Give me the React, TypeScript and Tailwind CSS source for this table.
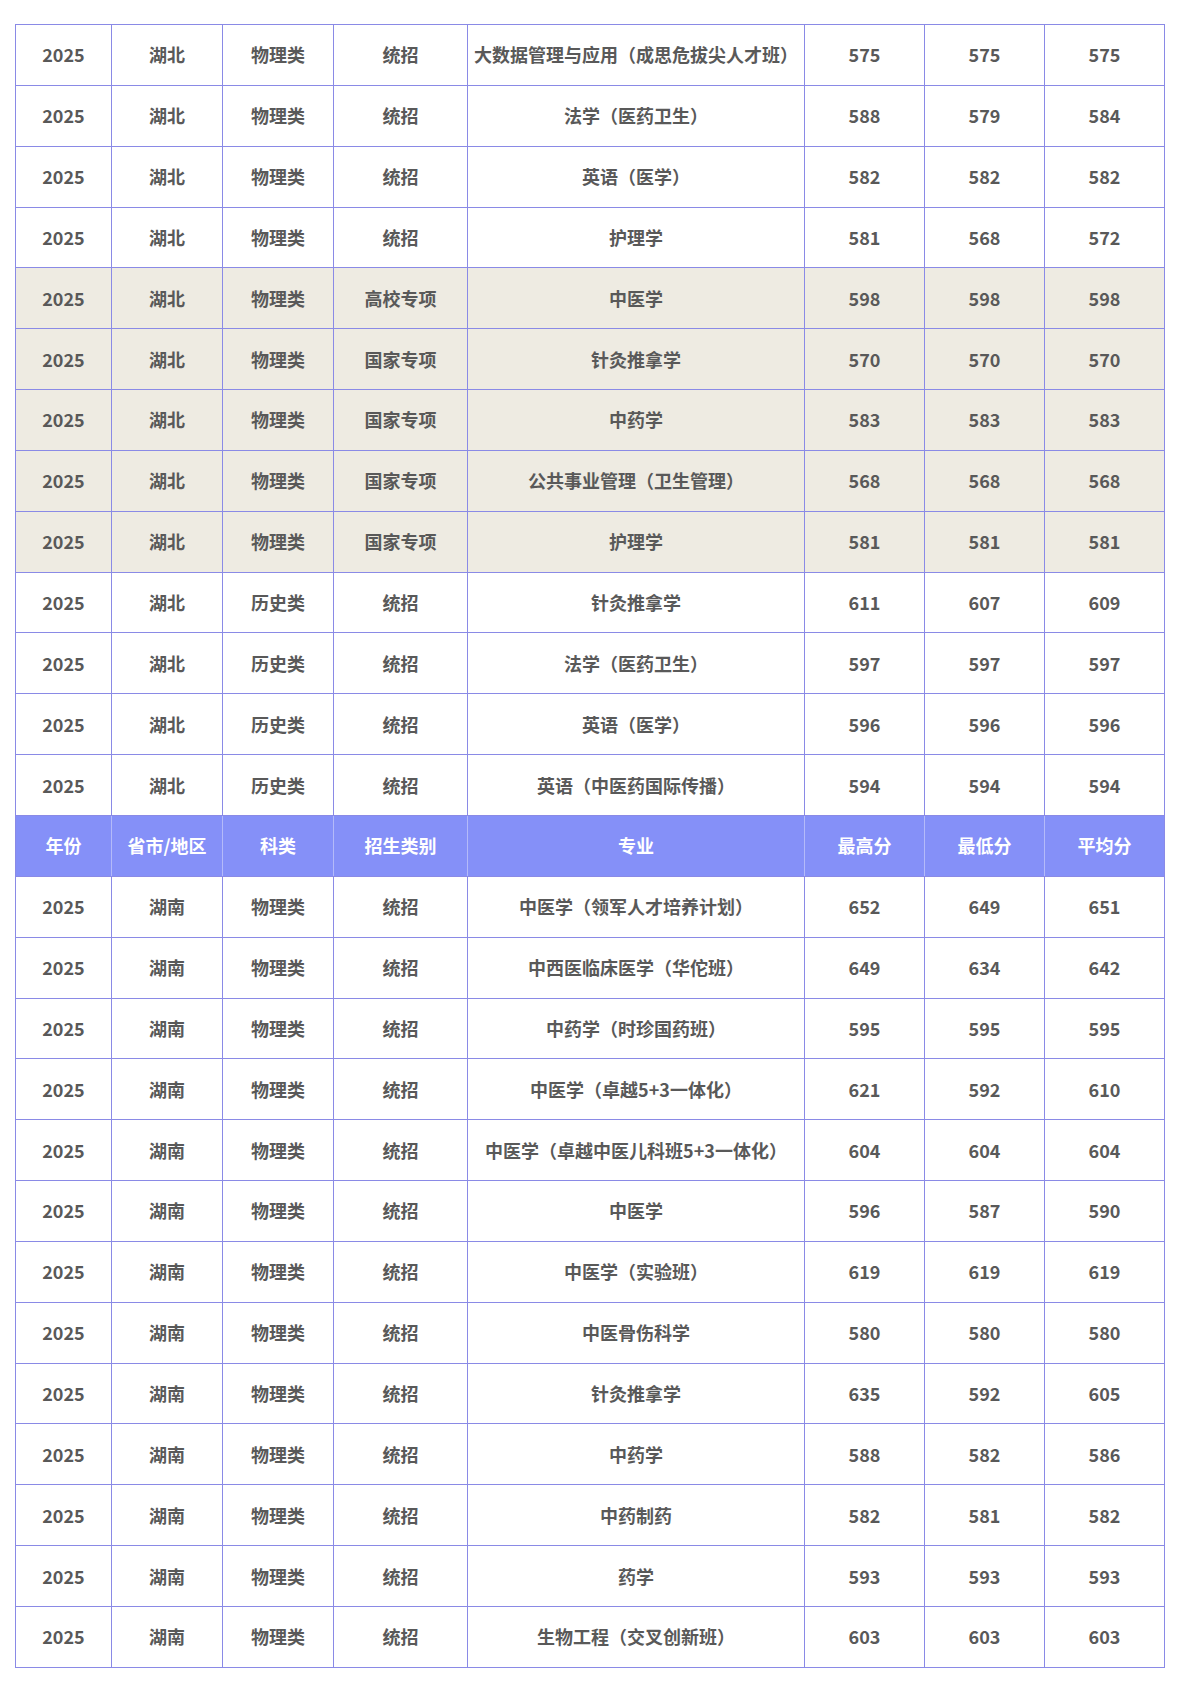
const rows: [string, string, string, string, string, string, string, string, boolean?][] = [
  ["2025", "湖北", "物理类", "统招", "大数据管理与应用（成思危拔尖人才班）", "575", "575", "575"],
  ["2025", "湖北", "物理类", "统招", "法学（医药卫生）", "588", "579", "584"],
  ["2025", "湖北", "物理类", "统招", "英语（医学）", "582", "582", "582"],
  ["2025", "湖北", "物理类", "统招", "护理学", "581", "568", "572"],
  ["2025", "湖北", "物理类", "高校专项", "中医学", "598", "598", "598", true],
  ["2025", "湖北", "物理类", "国家专项", "针灸推拿学", "570", "570", "570", true],
  ["2025", "湖北", "物理类", "国家专项", "中药学", "583", "583", "583", true],
  ["2025", "湖北", "物理类", "国家专项", "公共事业管理（卫生管理）", "568", "568", "568", true],
  ["2025", "湖北", "物理类", "国家专项", "护理学", "581", "581", "581", true],
  ["2025", "湖北", "历史类", "统招", "针灸推拿学", "611", "607", "609"],
  ["2025", "湖北", "历史类", "统招", "法学（医药卫生）", "597", "597", "597"],
  ["2025", "湖北", "历史类", "统招", "英语（医学）", "596", "596", "596"],
  ["2025", "湖北", "历史类", "统招", "英语（中医药国际传播）", "594", "594", "594"],
];

const hunan: [string, string, string, string][] = [
  ["中医学（领军人才培养计划）", "652", "649", "651"],
  ["中西医临床医学（华佗班）", "649", "634", "642"],
  ["中药学（时珍国药班）", "595", "595", "595"],
  ["中医学（卓越5+3一体化）", "621", "592", "610"],
  ["中医学（卓越中医儿科班5+3一体化）", "604", "604", "604"],
  ["中医学", "596", "587", "590"],
  ["中医学（实验班）", "619", "619", "619"],
  ["中医骨伤科学", "580", "580", "580"],
  ["针灸推拿学", "635", "592", "605"],
  ["中药学", "588", "582", "586"],
  ["中药制药", "582", "581", "582"],
  ["药学", "593", "593", "593"],
  ["生物工程（交叉创新班）", "603", "603", "603"],
];

const headers = ["年份", "省市/地区", "科类", "招生类别", "专业", "最高分", "最低分", "平均分"];
const widths = [96, 111, 111, 134, 337, 120, 120, 120];

const cell = "border border-[#8a8ae6] text-center align-middle px-0 whitespace-nowrap";

export default function App() {
  const bottom = hunan.map((h) => ["2025", "湖南", "物理类", "统招", ...h]);
  return (
    <div className="bg-white w-[1190px] min-h-[1683px] pt-[24px] pl-[15px]">
      <table
        className="table-fixed border-collapse w-[1150px] text-[18px] font-bold text-[#595959]"
        style={{ fontFamily: '"Noto Sans CJK SC", "Noto Sans", sans-serif' }}
      >
        <colgroup>
          {widths.map((w, i) => (
            <col key={i} style={{ width: w }} />
          ))}
        </colgroup>
        <tbody>
          {rows.map((r, i) => (
            <tr key={i} className={`h-[60.85px] ${r[8] ? "bg-[#eeebe2]" : "bg-white"}`}>
              {r.slice(0, 8).map((c, j) => (
                <td key={j} className={cell}>
                  {c}
                </td>
              ))}
            </tr>
          ))}
          <tr className="h-[60.85px] bg-[#8590f8] text-white">
            {headers.map((h, j) => (
              <td
                key={j}
                className="border-y border-y-[#8a8ae6] border-x border-x-[#b4baf9] first:border-l-[#8a8ae6] last:border-r-[#8a8ae6] text-center align-middle"
              >
                {h}
              </td>
            ))}
          </tr>
          {bottom.map((r, i) => (
            <tr key={i} className="h-[60.85px] bg-white">
              {r.map((c, j) => (
                <td key={j} className={cell}>
                  {c}
                </td>
              ))}
            </tr>
          ))}
        </tbody>
      </table>
    </div>
  );
}
